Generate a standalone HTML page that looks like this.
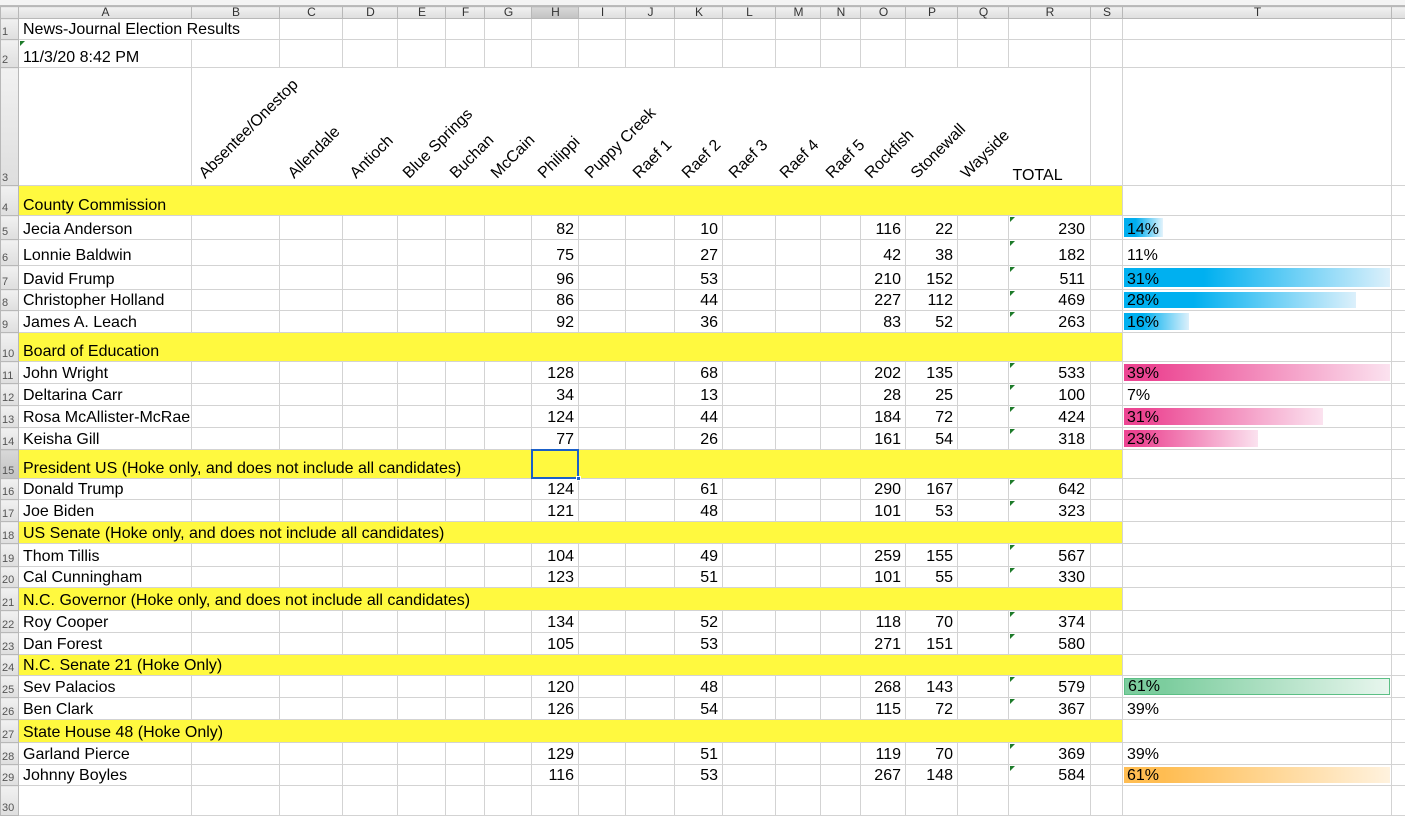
<!DOCTYPE html>
<html><head><meta charset="utf-8"><style>
*{margin:0;padding:0;box-sizing:border-box}
body{width:1405px;height:801px;overflow:hidden;background:#fff;font-family:"Liberation Sans",sans-serif;font-size:16px;color:#000;position:relative}
.top{position:absolute;left:0;top:0;width:1405px;height:6px;background:#f4f4f4;border-bottom:1px solid #bbb}
table{position:absolute;left:0;top:6px;width:1405px;table-layout:fixed;border-collapse:collapse}
td,th{border:1px solid #d3d3d3;padding:0;white-space:nowrap;overflow:visible;vertical-align:bottom;line-height:19px}
th{background:linear-gradient(#f1f1f1,#dedede);font-weight:normal;color:#555;font-size:11px;border-color:#b8b8b8;text-align:left;padding-left:1px;vertical-align:bottom;line-height:14px}
tr.h th{text-align:center;font-size:12px;color:#333;vertical-align:middle;line-height:11px}
tr.h th.sel{background:linear-gradient(#d8d8d8,#c2c2c2)}
td.a{padding-left:4px}
td.n{text-align:right;padding-right:4px}
td.r{text-align:right;padding-right:5px;position:relative}
td.r::before,.tri{content:"";position:absolute;left:1px;top:1px;border-style:solid;border-width:5px 5px 0 0;border-color:#1d7b2a transparent transparent transparent}
tr.y td.yl{background:#fff93f;border-left:none;border-right:none;padding-left:4px;overflow:visible}
td.t{position:relative;padding-left:4px}
.bar{position:absolute;left:1px;top:2px;bottom:2px}
.bar span{position:absolute;left:3px;bottom:-2px;line-height:19px}
.lab{position:absolute;font-size:16px;transform:rotate(-45deg);transform-origin:0 100%;white-space:nowrap;line-height:16px}
</style></head><body>
<div class="top"></div>
<table>
<colgroup><col style="width:18px"><col style="width:173px"><col style="width:88px"><col style="width:63px"><col style="width:55px"><col style="width:48px"><col style="width:39px"><col style="width:47px"><col style="width:47px"><col style="width:47px"><col style="width:49px"><col style="width:48px"><col style="width:53px"><col style="width:45px"><col style="width:40px"><col style="width:45px"><col style="width:52px"><col style="width:51px"><col style="width:82px"><col style="width:32px"><col style="width:269px"><col style="width:14px"></colgroup>
<tr class="h" style="height:12px"><th></th><th>A</th><th>B</th><th>C</th><th>D</th><th>E</th><th>F</th><th>G</th><th class="sel">H</th><th>I</th><th>J</th><th>K</th><th>L</th><th>M</th><th>N</th><th>O</th><th>P</th><th>Q</th><th>R</th><th>S</th><th>T</th><th></th></tr>
<tr style="height:21px"><th>1</th><td class="a" colspan="2">News-Journal Election Results</td><td></td><td></td><td></td><td></td><td></td><td></td><td></td><td></td><td></td><td></td><td></td><td></td><td></td><td></td><td></td><td></td><td></td><td></td><td></td></tr>
<tr style="height:28px"><th>2</th><td class="a" style="position:relative"><div class="tri"></div>11/3/20 8:42 PM</td><td></td><td></td><td></td><td></td><td></td><td></td><td></td><td></td><td></td><td></td><td></td><td></td><td></td><td></td><td></td><td></td><td></td><td></td><td></td><td></td></tr>
<tr style="height:118px"><th>3</th><td></td><td colspan="16" style="border:none;border-top:1px solid #d3d3d3"></td><td style="border-left:none;text-align:left;padding-left:4px">TOTAL</td><td></td><td></td><td></td></tr>
<tr class="y" style="height:30px"><th>4</th><td class="yl" colspan="19">County Commission</td><td></td><td></td></tr>
<tr style="height:24px"><th>5</th><td class="a">Jecia Anderson</td><td></td><td></td><td></td><td></td><td></td><td></td><td class="n">82</td><td></td><td></td><td class="n">10</td><td></td><td></td><td></td><td class="n">116</td><td class="n">22</td><td></td><td class="r">230</td><td></td><td class="t"><div class="bar" style="width:39px;background:linear-gradient(90deg,#00aeef 30%,#e3f3fc)"><span>14%</span></div></td><td></td></tr>
<tr style="height:26px"><th>6</th><td class="a">Lonnie Baldwin</td><td></td><td></td><td></td><td></td><td></td><td></td><td class="n">75</td><td></td><td></td><td class="n">27</td><td></td><td></td><td></td><td class="n">42</td><td class="n">38</td><td></td><td class="r">182</td><td></td><td class="t">11%</td><td></td></tr>
<tr style="height:24px"><th>7</th><td class="a">David Frump</td><td></td><td></td><td></td><td></td><td></td><td></td><td class="n">96</td><td></td><td></td><td class="n">53</td><td></td><td></td><td></td><td class="n">210</td><td class="n">152</td><td></td><td class="r">511</td><td></td><td class="t"><div class="bar" style="width:266px;background:linear-gradient(90deg,#00b0f0 30%,#dcf0fb)"><span>31%</span></div></td><td></td></tr>
<tr style="height:21px"><th>8</th><td class="a">Christopher Holland</td><td></td><td></td><td></td><td></td><td></td><td></td><td class="n">86</td><td></td><td></td><td class="n">44</td><td></td><td></td><td></td><td class="n">227</td><td class="n">112</td><td></td><td class="r">469</td><td></td><td class="t"><div class="bar" style="width:232px;background:linear-gradient(90deg,#00b0f0 30%,#dcf0fb)"><span>28%</span></div></td><td></td></tr>
<tr style="height:22px"><th>9</th><td class="a">James A. Leach</td><td></td><td></td><td></td><td></td><td></td><td></td><td class="n">92</td><td></td><td></td><td class="n">36</td><td></td><td></td><td></td><td class="n">83</td><td class="n">52</td><td></td><td class="r">263</td><td></td><td class="t"><div class="bar" style="width:65px;background:linear-gradient(90deg,#00b0f0 30%,#dcf0fb)"><span>16%</span></div></td><td></td></tr>
<tr class="y" style="height:29px"><th>10</th><td class="yl" colspan="19">Board of Education</td><td></td><td></td></tr>
<tr style="height:22px"><th>11</th><td class="a">John Wright</td><td></td><td></td><td></td><td></td><td></td><td></td><td class="n">128</td><td></td><td></td><td class="n">68</td><td></td><td></td><td></td><td class="n">202</td><td class="n">135</td><td></td><td class="r">533</td><td></td><td class="t"><div class="bar" style="width:266px;background:linear-gradient(90deg,#ec4592 10%,#fbe2ef)"><span>39%</span></div></td><td></td></tr>
<tr style="height:22px"><th>12</th><td class="a">Deltarina Carr</td><td></td><td></td><td></td><td></td><td></td><td></td><td class="n">34</td><td></td><td></td><td class="n">13</td><td></td><td></td><td></td><td class="n">28</td><td class="n">25</td><td></td><td class="r">100</td><td></td><td class="t">7%</td><td></td></tr>
<tr style="height:22px"><th>13</th><td class="a">Rosa McAllister-McRae</td><td></td><td></td><td></td><td></td><td></td><td></td><td class="n">124</td><td></td><td></td><td class="n">44</td><td></td><td></td><td></td><td class="n">184</td><td class="n">72</td><td></td><td class="r">424</td><td></td><td class="t"><div class="bar" style="width:199px;background:linear-gradient(90deg,#ec4592 10%,#fbe2ef)"><span>31%</span></div></td><td></td></tr>
<tr style="height:22px"><th>14</th><td class="a">Keisha Gill</td><td></td><td></td><td></td><td></td><td></td><td></td><td class="n">77</td><td></td><td></td><td class="n">26</td><td></td><td></td><td></td><td class="n">161</td><td class="n">54</td><td></td><td class="r">318</td><td></td><td class="t"><div class="bar" style="width:134px;background:linear-gradient(90deg,#ec4592 10%,#fbe2ef)"><span>23%</span></div></td><td></td></tr>
<tr class="y" style="height:29px"><th style="background:linear-gradient(#d8d8d8,#c2c2c2)">15</th><td class="yl" colspan="19">President US (Hoke only, and does not include all candidates)</td><td></td><td></td></tr>
<tr style="height:21px"><th>16</th><td class="a">Donald Trump</td><td></td><td></td><td></td><td></td><td></td><td></td><td class="n">124</td><td></td><td></td><td class="n">61</td><td></td><td></td><td></td><td class="n">290</td><td class="n">167</td><td></td><td class="r">642</td><td></td><td></td><td></td></tr>
<tr style="height:22px"><th>17</th><td class="a">Joe Biden</td><td></td><td></td><td></td><td></td><td></td><td></td><td class="n">121</td><td></td><td></td><td class="n">48</td><td></td><td></td><td></td><td class="n">101</td><td class="n">53</td><td></td><td class="r">323</td><td></td><td></td><td></td></tr>
<tr class="y" style="height:22px"><th>18</th><td class="yl" colspan="19">US Senate (Hoke only, and does not include all candidates)</td><td></td><td></td></tr>
<tr style="height:23px"><th>19</th><td class="a">Thom Tillis</td><td></td><td></td><td></td><td></td><td></td><td></td><td class="n">104</td><td></td><td></td><td class="n">49</td><td></td><td></td><td></td><td class="n">259</td><td class="n">155</td><td></td><td class="r">567</td><td></td><td></td><td></td></tr>
<tr style="height:21px"><th>20</th><td class="a">Cal Cunningham</td><td></td><td></td><td></td><td></td><td></td><td></td><td class="n">123</td><td></td><td></td><td class="n">51</td><td></td><td></td><td></td><td class="n">101</td><td class="n">55</td><td></td><td class="r">330</td><td></td><td></td><td></td></tr>
<tr class="y" style="height:23px"><th>21</th><td class="yl" colspan="19">N.C. Governor (Hoke only, and does not include all candidates)</td><td></td><td></td></tr>
<tr style="height:22px"><th>22</th><td class="a">Roy Cooper</td><td></td><td></td><td></td><td></td><td></td><td></td><td class="n">134</td><td></td><td></td><td class="n">52</td><td></td><td></td><td></td><td class="n">118</td><td class="n">70</td><td></td><td class="r">374</td><td></td><td></td><td></td></tr>
<tr style="height:22px"><th>23</th><td class="a">Dan Forest</td><td></td><td></td><td></td><td></td><td></td><td></td><td class="n">105</td><td></td><td></td><td class="n">53</td><td></td><td></td><td></td><td class="n">271</td><td class="n">151</td><td></td><td class="r">580</td><td></td><td></td><td></td></tr>
<tr class="y" style="height:21px"><th>24</th><td class="yl" colspan="19">N.C. Senate 21 (Hoke Only)</td><td></td><td></td></tr>
<tr style="height:22px"><th>25</th><td class="a">Sev Palacios</td><td></td><td></td><td></td><td></td><td></td><td></td><td class="n">120</td><td></td><td></td><td class="n">48</td><td></td><td></td><td></td><td class="n">268</td><td class="n">143</td><td></td><td class="r">579</td><td></td><td class="t"><div class="bar" style="width:266px;background:linear-gradient(90deg,#7ccd9e 15%,#e8f6ee);border:1px solid #5cbf85"><span>61%</span></div></td><td></td></tr>
<tr style="height:22px"><th>26</th><td class="a">Ben Clark</td><td></td><td></td><td></td><td></td><td></td><td></td><td class="n">126</td><td></td><td></td><td class="n">54</td><td></td><td></td><td></td><td class="n">115</td><td class="n">72</td><td></td><td class="r">367</td><td></td><td class="t">39%</td><td></td></tr>
<tr class="y" style="height:23px"><th>27</th><td class="yl" colspan="19">State House 48 (Hoke Only)</td><td></td><td></td></tr>
<tr style="height:22px"><th>28</th><td class="a">Garland Pierce</td><td></td><td></td><td></td><td></td><td></td><td></td><td class="n">129</td><td></td><td></td><td class="n">51</td><td></td><td></td><td></td><td class="n">119</td><td class="n">70</td><td></td><td class="r">369</td><td></td><td class="t">39%</td><td></td></tr>
<tr style="height:21px"><th>29</th><td class="a">Johnny Boyles</td><td></td><td></td><td></td><td></td><td></td><td></td><td class="n">116</td><td></td><td></td><td class="n">53</td><td></td><td></td><td></td><td class="n">267</td><td class="n">148</td><td></td><td class="r">584</td><td></td><td class="t"><div class="bar" style="width:266px;background:linear-gradient(90deg,#ffbd52 15%,#fff2de)"><span>61%</span></div></td><td></td></tr>
<tr style="height:30px"><th>30</th><td></td><td></td><td></td><td></td><td></td><td></td><td></td><td></td><td></td><td></td><td></td><td></td><td></td><td></td><td></td><td></td><td></td><td></td><td></td><td></td><td></td></tr>
</table>
<div style="position:absolute;left:531px;top:449px;width:48px;height:30px;border:2px solid #1a5fc8"></div>
<div style="position:absolute;left:576px;top:476px;width:5px;height:5px;background:#1a5fc8;border:1px solid #fff"></div>
<div class="lab" style="left:208px;top:166px">Absentee/Onestop</div>
<div class="lab" style="left:297px;top:166px">Allendale</div>
<div class="lab" style="left:359px;top:166px">Antioch</div>
<div class="lab" style="left:412px;top:166px">Blue Springs</div>
<div class="lab" style="left:459px;top:166px">Buchan</div>
<div class="lab" style="left:500px;top:166px">McCain</div>
<div class="lab" style="left:547px;top:166px">Philippi</div>
<div class="lab" style="left:594px;top:166px">Puppy Creek</div>
<div class="lab" style="left:642px;top:166px">Raef 1</div>
<div class="lab" style="left:691px;top:166px">Raef 2</div>
<div class="lab" style="left:738px;top:166px">Raef 3</div>
<div class="lab" style="left:789px;top:166px">Raef 4</div>
<div class="lab" style="left:835px;top:166px">Raef 5</div>
<div class="lab" style="left:874px;top:166px">Rockfish</div>
<div class="lab" style="left:920px;top:166px">Stonewall</div>
<div class="lab" style="left:970px;top:166px">Wayside</div>
</body></html>
